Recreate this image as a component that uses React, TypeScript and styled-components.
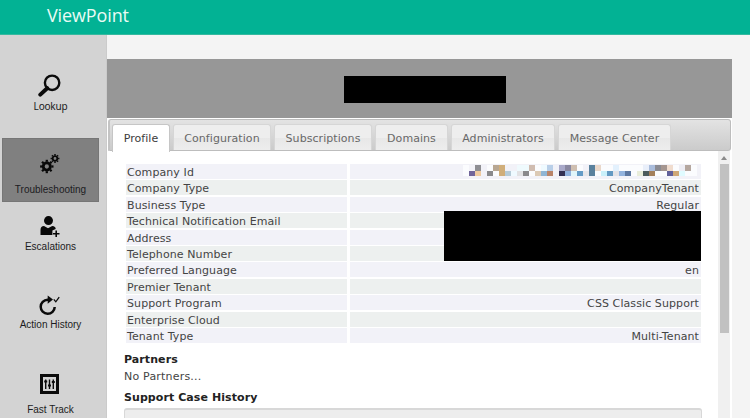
import React from "react";
import styled, { createGlobalStyle } from "styled-components";

const GlobalStyle = createGlobalStyle`
  * { box-sizing: border-box; }
  body { margin: 0; overflow: hidden; background: #f4f4f4; }
`;

const Page = styled.div`
  width: 750px;
  height: 418px;
  display: flex;
  flex-direction: column;
  overflow: hidden;
  background: #f4f4f4;
  font-family: Verdana, "DejaVu Sans", sans-serif;
  color: #444;
`;

const TopBar = styled.header`
  flex: none;
  height: 35px;
  padding-left: 47px;
  background: #02b294;
  border-bottom: 1px solid #35b99f;
  color: #e9fbf4;
  font: 18px/31px "Open Sans", "Noto Sans", sans-serif;
  letter-spacing: -0.12px;
`;

const Body = styled.div`
  flex: 1;
  min-height: 0;
  display: flex;
`;

const Sidebar = styled.nav`
  flex: none;
  width: 107px;
  padding: 26px 0 0 2px;
  background: #d3d3d3;
  border-right: 1px solid #cbcbcb;
`;

const NavItem = styled.div<{ $height: number; $top: number; $gap: number; $active?: boolean }>`
  width: 97px;
  height: ${(p) => p.$height}px;
  padding-top: ${(p) => p.$top}px;
  display: flex;
  flex-direction: column;
  align-items: center;
  gap: ${(p) => p.$gap}px;
  background: ${(p) => (p.$active ? "#808080" : "transparent")};
  border: 1px solid ${(p) => (p.$active ? "#767676" : "transparent")};
  svg { display: block; flex: none; margin-right: 2px; }
`;

const NavLabel = styled.span<{ $humanist?: boolean }>`
  font: 10px/12px ${(p) => (p.$humanist ? `"Noto Sans"` : `"Liberation Sans"`)}, Arial, sans-serif;
  letter-spacing: ${(p) => (p.$humanist ? -0.2 : 0)}px;
  color: #1c1c22;
  white-space: nowrap;
`;

const Main = styled.main`
  flex: none;
  width: 625px;
  margin-top: 24px;
  display: flex;
  flex-direction: column;
  background: #fff;
`;

const Banner = styled.div`
  flex: none;
  height: 59px;
  padding: 17px 0 0 237px;
  background: #979797;
`;

const BannerRedaction = styled.div`
  width: 162px;
  height: 27px;
  background: #000;
`;

const TabBar = styled.div`
  flex: none;
  height: 32px;
  margin: 1px 1px 0;
  padding: 4px 0 0 2px;
  display: flex;
  gap: 3px;
  border: 1px solid #bdbdbd;
  border-left: 2px solid #c4c4c4;
  border-radius: 3px;
  border-bottom-left-radius: 0;
  background: linear-gradient(#e3e3e3, #cbcbcb);
`;

const Tab = styled.div<{ $width: number; $active?: boolean }>`
  width: ${(p) => p.$width}px;
  height: ${(p) => (p.$active ? 28 : 26)}px;
  border: 1px solid ${(p) => (p.$active ? "#c6c6c6" : "#d6d6d6")};
  border-bottom: 0;
  border-radius: 3px 3px 0 0;
  background: ${(p) => (p.$active ? "#fff" : "linear-gradient(#eeeeee 50%, #e7e7e7 50%, #ededed)")};
  color: ${(p) => (p.$active ? "#3c3c3c" : "#686868")};
  font-size: 11px;
  line-height: 27px;
  letter-spacing: 0.06px;
  text-align: center;
  white-space: nowrap;
`;

const Panel = styled.section`
  flex: 1;
  min-height: 0;
  display: flex;
  justify-content: space-between;
`;

const Content = styled.div`
  width: 595px;
  padding: 13px 0 0 17px;
`;

const Table = styled.div`
  position: relative;
  width: 575px;
  margin-left: 2px;
  display: grid;
  grid-template-columns: 221px 351px;
  grid-auto-rows: 15px;
  column-gap: 3px;
  row-gap: 1.4px;
`;

const Cell = styled.div<{ $odd: boolean; $value?: boolean }>`
  display: flex;
  justify-content: ${(p) => (p.$value ? "flex-end" : "flex-start")};
  padding: 0 ${(p) => (p.$value ? 2 : 0)}px 0 ${(p) => (p.$value ? 0 : 1)}px;
  background: ${(p) => (p.$odd ? "#edf0ef" : "#f2f2f8")};
  font-size: 11px;
  line-height: 17px;
  letter-spacing: 0.09px;
  white-space: nowrap;
`;

const Redaction = styled.div`
  position: absolute;
  left: 318px;
  top: 47px;
  width: 257px;
  height: 50px;
  background: #000;
`;

const Mosaic = styled.div`
  width: 234px;
  height: 11px;
  margin: 1px 2px 0 0;
  display: grid;
  grid-template-columns: repeat(39, 6px);
  grid-template-rows: 6px 5px;
`;

const Pixel = styled.i<{ $color: string }>`
  background: ${(p) => p.$color};
`;

const Heading = styled.h3<{ $top: number }>`
  margin: ${(p) => p.$top}px 0 0;
  font-size: 11px;
  line-height: 16px;
  font-weight: bold;
  letter-spacing: 0.08px;
  color: #222;
`;

const Note = styled.p`
  margin: 0;
  font-size: 11px;
  line-height: 17px;
  letter-spacing: 0.2px;
`;

const HistoryBox = styled.div`
  width: 578px;
  height: 30px;
  margin-top: 2px;
  border: 1px solid #d8d8d8;
  border-top-width: 2px;
  border-radius: 3px;
  background: #ededed;
`;

const ScrollTrack = styled.div`
  width: 12px;
  margin-right: 2px;
  display: flex;
  flex-direction: column;
  align-items: center;
  background: #f0f0f0;
`;

const ScrollArrow = styled.div`
  width: 0;
  margin: 5px 0 4px;
  border: 3px solid transparent;
  border-top: 0;
  border-bottom: 4px solid #8a8a8a;
`;

const ScrollThumb = styled.div`
  width: 9px;
  height: 169px;
  background: #c1c1c1;
`;

const LookupIcon = () => (
  <svg width="24" height="24" viewBox="0 0 24 24" fill="none" stroke="#0b0b0b">
    <circle cx="14.1" cy="8.8" r="7.2" strokeWidth="2.4" />
    <path d="M9.2 14.2 2.3 20.6" strokeWidth="4" strokeLinecap="round" />
  </svg>
);

const Gear = ({ cx, cy, r }: { cx: number; cy: number; r: number }) => (
  <g transform={`translate(${cx} ${cy})`} fill="none" stroke="#080808">
    <circle r={r * 0.53} strokeWidth={r * 0.42} />
    {[0, 45, 90, 135, 180, 225, 270, 315].map((a) => (
      <path key={a} d={`M0 ${-r * 0.7}V${-r}`} strokeWidth={r * 0.34} transform={`rotate(${a})`} />
    ))}
  </g>
);

const GearsIcon = () => (
  <svg width="20" height="20" viewBox="0 0 20 20">
    <Gear cx={6.8} cy={12.5} r={6.7} />
    <Gear cx={15} cy={4.5} r={4.4} />
  </svg>
);

const EscalationIcon = () => (
  <svg width="20" height="21" viewBox="0 0 20 21">
    <circle cx="8.5" cy="4.6" r="4.5" fill="#080808" />
    <path d="M.5 19V14Q.5 10.3 4 10.1L8 12.2 12.2 10.1Q15.7 10.4 15.7 13L12.4 14.5V19Z" fill="#080808" />
    <path d="M16.2 14.5V21M13 17.7H19.5" stroke="#080808" strokeWidth="1.6" />
  </svg>
);

const HistoryIcon = () => (
  <svg width="21" height="22" viewBox="0 0 21 22">
    <path d="M10.5 4.8H8.6A7 7 0 1 0 15.7 12" fill="none" stroke="#0b0b0b" strokeWidth="2.5" />
    <path d="M8.7.5 14 4.6 8.7 8.7Z" fill="#0b0b0b" />
    <path d="M14.8 4.4 16.8 6.8 20.2 2.2" fill="none" stroke="#0b0b0b" strokeWidth="1.3" />
  </svg>
);

const FastTrackIcon = () => (
  <svg width="19" height="20" viewBox="0 0 19 20" fill="none" stroke="#0b0b0b">
    <path d="M1.5 1.5H17.5V18.5H1.5Z" strokeWidth="3" />
    <path d="M5.7 5.5V15M9.5 5.5V15M13.3 5.5V15" strokeWidth="1.4" />
    <path d="M4.2 7.5H7.2M8 11.5H11M11.8 8H14.8" strokeWidth="2" />
  </svg>
);

const blank = "#fbfcfe";
const mosaicTop: Record<number, string> = {
  1: "#f4f4f9", 2: "#8f8f93", 3: "#f2f2f8", 5: "#b8a792", 6: "#d0ae7a", 7: "#f2f2f8", 8: "#f2f2f8",
  9: "#effafd", 10: "#effafd", 11: "#d0bcb0", 13: "#effaff", 14: "#b9cfe8", 15: "#f2f2f8",
  16: "#a9a9c9", 17: "#8987a0", 18: "#cfbfb1", 20: "#f2f2f8", 21: "#5a819d", 22: "#ead8ca",
  25: "#e3f1fd", 30: "#e9effa", 31: "#aabddc", 32: "#8b8b92", 33: "#a59690", 34: "#f0dcce",
  36: "#eeeef5", 37: "#b5a79f",
};
const mosaicBottom: Record<number, string> = {
  1: "#71659a", 2: "#efcaa0", 3: "#f2f2f8", 4: "#8a8a8c", 6: "#d0ae7a", 7: "#b5cbd8", 8: "#effaff",
  9: "#e2e2e4", 10: "#89898b", 12: "#dccab5", 13: "#8fb5d4", 14: "#b98469", 15: "#f2f2f8",
  16: "#333052", 17: "#90b0dc", 18: "#e0f5fa", 19: "#649bc6", 20: "#e6e6ea", 21: "#5a819d",
  23: "#c9f0fa", 24: "#6399c2", 25: "#e3e3e8", 26: "#92b3de", 27: "#5d77a0", 29: "#e9edda",
  30: "#4b5b5c", 31: "#a37f5b", 34: "#61609a", 35: "#cfa877", 36: "#e0fbff",
};

const CompanyIdMosaic = () => (
  <Mosaic>
    {[mosaicTop, mosaicBottom].map((row, r) =>
      Array.from({ length: 39 }, (_, c) => <Pixel key={`${r}-${c}`} $color={row[c] ?? blank} />)
    )}
  </Mosaic>
);

const rows: [string, React.ReactNode][] = [
  ["Company Id", <CompanyIdMosaic />],
  ["Company Type", "CompanyTenant"],
  ["Business Type", "Regular"],
  ["Technical Notification Email", ""],
  ["Address", ""],
  ["Telephone Number", ""],
  ["Preferred Language", "en"],
  ["Premier Tenant", ""],
  ["Support Program", "CSS Classic Support"],
  ["Enterprise Cloud", ""],
  ["Tenant Type", "Multi-Tenant"],
];

const tabs = [
  { label: "Profile", width: 58 },
  { label: "Configuration", width: 98 },
  { label: "Subscriptions", width: 98 },
  { label: "Domains", width: 73 },
  { label: "Administrators", width: 104 },
  { label: "Message Center", width: 113 },
];

export default function App() {
  return (
    <Page>
      <GlobalStyle />
      <TopBar>ViewPoint</TopBar>
      <Body>
        <Sidebar>
          <NavItem $height={77} $top={12} $gap={2}>
            <LookupIcon />
            <NavLabel $humanist>Lookup</NavLabel>
          </NavItem>
          <NavItem $height={64} $top={15} $gap={10} $active>
            <GearsIcon />
            <NavLabel>Troubleshooting</NavLabel>
          </NavItem>
          <NavItem $height={76} $top={13} $gap={4}>
            <EscalationIcon />
            <NavLabel>Escalations</NavLabel>
          </NavItem>
          <NavItem $height={81} $top={16} $gap={2}>
            <HistoryIcon />
            <NavLabel>Action History</NavLabel>
          </NavItem>
          <NavItem $height={60} $top={14} $gap={10}>
            <FastTrackIcon />
            <NavLabel>Fast Track</NavLabel>
          </NavItem>
        </Sidebar>
        <Main>
          <Banner>
            <BannerRedaction />
          </Banner>
          <TabBar>
            {tabs.map((t, i) => (
              <Tab key={t.label} $width={t.width} $active={i === 0}>
                {t.label}
              </Tab>
            ))}
          </TabBar>
          <Panel>
            <Content>
              <Table>
                {rows.map(([name, value], i) => (
                  <React.Fragment key={name}>
                    <Cell $odd={i % 2 === 1}>{name}</Cell>
                    <Cell $odd={i % 2 === 1} $value>
                      {value}
                    </Cell>
                  </React.Fragment>
                ))}
                <Redaction />
              </Table>
              <Heading $top={9}>Partners</Heading>
              <Note>No Partners...</Note>
              <Heading $top={5}>Support Case History</Heading>
              <HistoryBox />
            </Content>
            <ScrollTrack>
              <ScrollArrow />
              <ScrollThumb />
            </ScrollTrack>
          </Panel>
        </Main>
      </Body>
    </Page>
  );
}
